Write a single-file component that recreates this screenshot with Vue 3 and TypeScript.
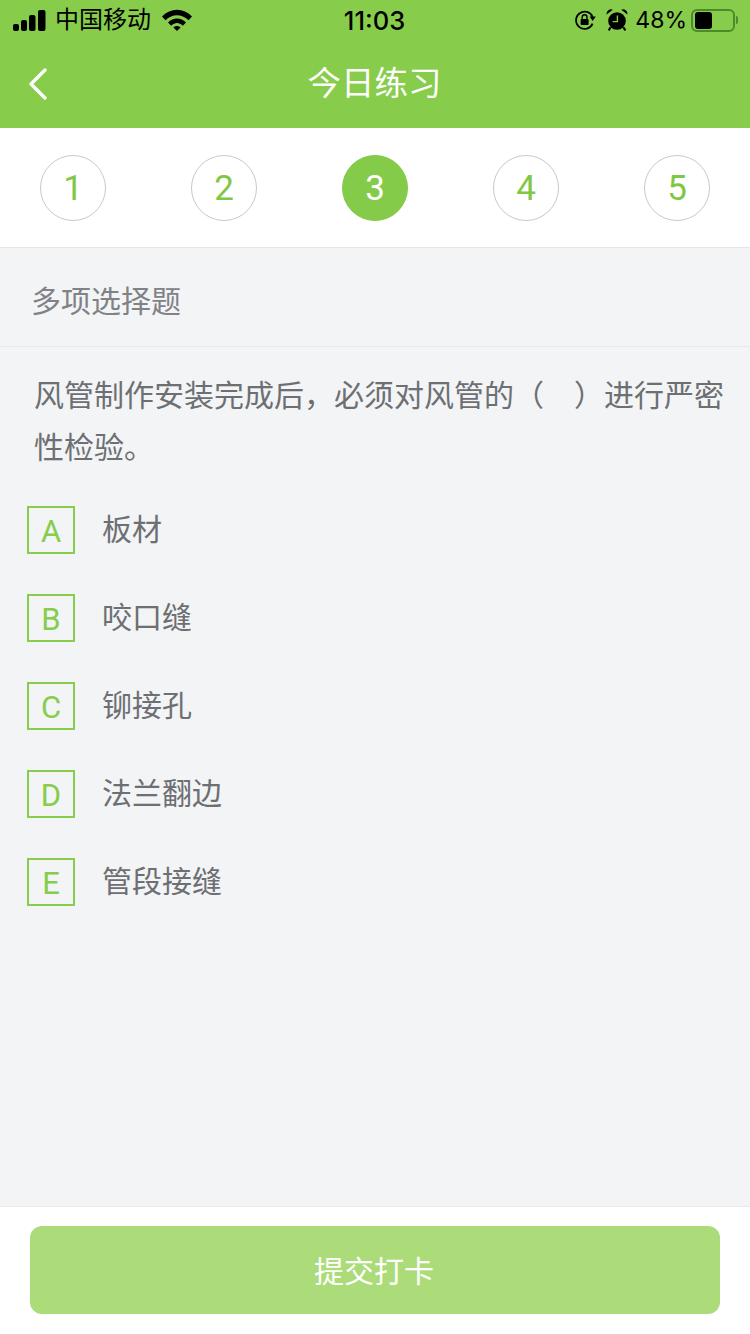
<script setup lang="ts">
const steps = [1, 2, 3, 4, 5]
const current = 3
const options = [
  { key: 'A', label: '板材' },
  { key: 'B', label: '咬口缝' },
  { key: 'C', label: '铆接孔' },
  { key: 'D', label: '法兰翻边' },
  { key: 'E', label: '管段接缝' },
]
</script>

<template>
  <div class="page">
    <header class="head">
      <div class="status">
        <div class="status-left">
          <svg class="signal" width="33" height="21" viewBox="0 0 33 21">
            <rect x="0" y="14" width="6" height="7" rx="2" />
            <rect x="8" y="10" width="6" height="11" rx="2" />
            <rect x="16" y="5" width="6.5" height="16" rx="2" />
            <rect x="25" y="0" width="7.5" height="21" rx="2" />
          </svg>
          <span class="carrier">中国移动</span>
          <svg class="wifi" width="30" height="22" viewBox="0 0 30 22">
            <path d="M0 7.5 C8.5 -1.5 21.5 -1.5 30 7.5 L26.5 11.2 C19.5 4.5 10.5 4.5 3.5 11.2 Z" />
            <path d="M6 13.5 C11 8 19 8 24 13.5 L20.8 16.8 C17.2 13.2 12.8 13.2 9.2 16.8 Z" />
            <path d="M11.4 18.4 C13.4 16.4 16.6 16.4 18.6 18.4 L15 22 Z" />
          </svg>
        </div>
        <span class="time">11:03</span>
        <div class="status-right">
          <svg class="lock" width="22" height="22" viewBox="0 0 22 22">
            <path d="M18.6 8 A8.6 8.6 0 1 0 18.6 14.6" fill="none" stroke="#000" stroke-width="1.8" />
            <path d="M15.6 7.5 L21.8 7.5 L18.7 12 Z" />
            <rect x="6.6" y="10" width="8" height="6" rx="1" />
            <path d="M8.2 10 V8.2 A2.4 2.4 0 0 1 13 8.2 V10" fill="none" stroke="#000" stroke-width="1.4" />
          </svg>
          <svg class="alarm" width="22" height="22" viewBox="0 0 22 22">
            <circle cx="11" cy="12" r="8.8" />
            <path d="M0.6 5.4 A4.4 4.4 0 0 1 6.8 0.8 Z M21.4 5.4 A4.4 4.4 0 0 0 15.2 0.8 Z" />
            <path d="M4.6 18.4 L2.6 21.4 M17.4 18.4 L19.4 21.4" stroke="#000" stroke-width="2" />
            <path d="M11.4 6.6 V12.6 H6.6" fill="none" stroke="#87cd4b" stroke-width="1.4" />
          </svg>
          <span class="pct">48%</span>
          <div class="battery"><i class="level"></i></div>
          <i class="battery-cap"></i>
        </div>
      </div>
      <div class="nav">
        <svg class="back" width="20" height="32" viewBox="0 0 20 32">
          <path d="M17 2 L3 16 L17 30" fill="none" stroke="#fff" stroke-width="3.2" stroke-linecap="round" stroke-linejoin="round" />
        </svg>
        <h1 class="title">今日练习</h1>
      </div>
    </header>

    <div class="steps">
      <div v-for="n in steps" :key="n" class="step" :class="{ active: n === current }">{{ n }}</div>
    </div>

    <main class="body">
      <div class="kind">多项选择题</div>
      <p class="question">风管制作安装完成后，必须对风管的（&ensp;&ensp;）进行严密性检验。</p>
      <ul class="options">
        <li v-for="o in options" :key="o.key" class="option">
          <span class="letter">{{ o.key }}</span>
          <span class="label">{{ o.label }}</span>
        </li>
      </ul>
    </main>

    <footer class="foot">
      <button class="submit" type="button">提交打卡</button>
    </footer>
  </div>
</template>

<style>
html,
body {
  margin: 0;
  background: #f2f4f6;
}
</style>

<style scoped>
.page {
  width: 750px;
  height: 1334px;
  display: flex;
  flex-direction: column;
  overflow: hidden;
  background: #f2f4f6;
  font-family: "Liberation Sans", "Noto Sans CJK SC", sans-serif;
}
.head {
  height: 128px;
  background: #87cd4b;
  flex: none;
}
.status {
  height: 40px;
  padding: 0 12px 0 13px;
  display: flex;
  align-items: center;
  justify-content: space-between;
  position: relative;
  color: #000;
}
.status svg {
  fill: #000;
  display: block;
}
.status-left {
  display: flex;
  align-items: center;
}
.signal {
  margin-right: 9px;
}
.carrier {
  font-size: 24px;
  line-height: 40px;
  width: 107px;
}
.time {
  position: absolute;
  left: 0;
  right: 1px;
  text-align: center;
  font-size: 25.5px;
  font-weight: 500;
  font-family: Inter, "Liberation Sans", sans-serif;
}
.status-right {
  display: flex;
  align-items: center;
}
.lock {
  margin-right: 10px;
}
.alarm {
  margin-right: 7px;
}
.pct {
  font-family: Inter, "Liberation Sans", sans-serif;
  font-size: 23px;
  margin-right: 4px;
}
.battery {
  width: 44px;
  height: 23px;
  box-sizing: border-box;
  border: 2px solid #4d8a2a;
  border-radius: 6px;
  padding: 1px 2px;
}
.level {
  display: block;
  width: 17px;
  height: 17px;
  background: #000;
  border-radius: 3px;
}
.battery-cap {
  display: block;
  width: 2px;
  height: 8px;
  margin-left: 1px;
  background: #4d8a2a;
  border-radius: 0 2px 2px 0;
}
.nav {
  height: 88px;
  display: flex;
  align-items: center;
  justify-content: center;
  position: relative;
}
.back {
  position: absolute;
  left: 28px;
  top: 28px;
}
.title {
  margin: 0 1px 0 0;
  font-size: 33.5px;
  font-weight: 400;
  color: #fff;
  line-height: 90px;
}
.steps {
  height: 120px;
  flex: none;
  box-sizing: border-box;
  background: #fff;
  border-bottom: 1px solid #e6e6e6;
  padding: 27px 40px 0;
  display: flex;
  justify-content: space-between;
  align-items: flex-start;
}
.step {
  width: 66px;
  height: 66px;
  box-sizing: border-box;
  border: 1px solid #c9c9c9;
  border-radius: 50%;
  display: flex;
  align-items: center;
  justify-content: center;
  font-family: Roboto, "Liberation Sans", sans-serif;
  font-size: 35px;
  color: #7fc846;
}
.step.active {
  background: #83cb48;
  border-color: #83cb48;
  color: #fff;
}
.body {
  flex: 1;
}
.kind {
  height: 99px;
  box-sizing: border-box;
  border-bottom: 1px solid #e6e8ea;
  padding-left: 31px;
  line-height: 108px;
  font-size: 30px;
  color: #808285;
}
.question {
  margin: 0;
  padding: 23px 20px 0 34px;
  font-size: 30px;
  line-height: 52px;
  color: #6d6f72;
}
.options {
  list-style: none;
  margin: 0;
  padding: 30px 0 0 27px;
}
.option {
  height: 88px;
  display: flex;
  align-items: flex-start;
  padding-top: 2px;
  box-sizing: border-box;
}
.letter {
  width: 48px;
  height: 48px;
  box-sizing: border-box;
  border: 2px solid #87cd4b;
  display: flex;
  align-items: center;
  justify-content: center;
  font-family: Roboto, "Liberation Sans", sans-serif;
  font-size: 31px;
  color: #87cd4b;
  padding-top: 2px;
}
.label {
  margin: 2px 0 0 27px;
  font-size: 30px;
  line-height: 44px;
  color: #6d6f72;
}
.foot {
  flex: none;
  height: 128px;
  box-sizing: border-box;
  background: #fff;
  border-top: 1px solid #e8eaec;
  padding: 19px 30px 0;
}
.submit {
  display: block;
  width: 100%;
  height: 88px;
  border: 0;
  border-radius: 12px;
  background: #abdc79;
  color: #fff;
  font-family: inherit;
  font-size: 30px;
  padding: 0 2px 3px 0;
}
</style>
